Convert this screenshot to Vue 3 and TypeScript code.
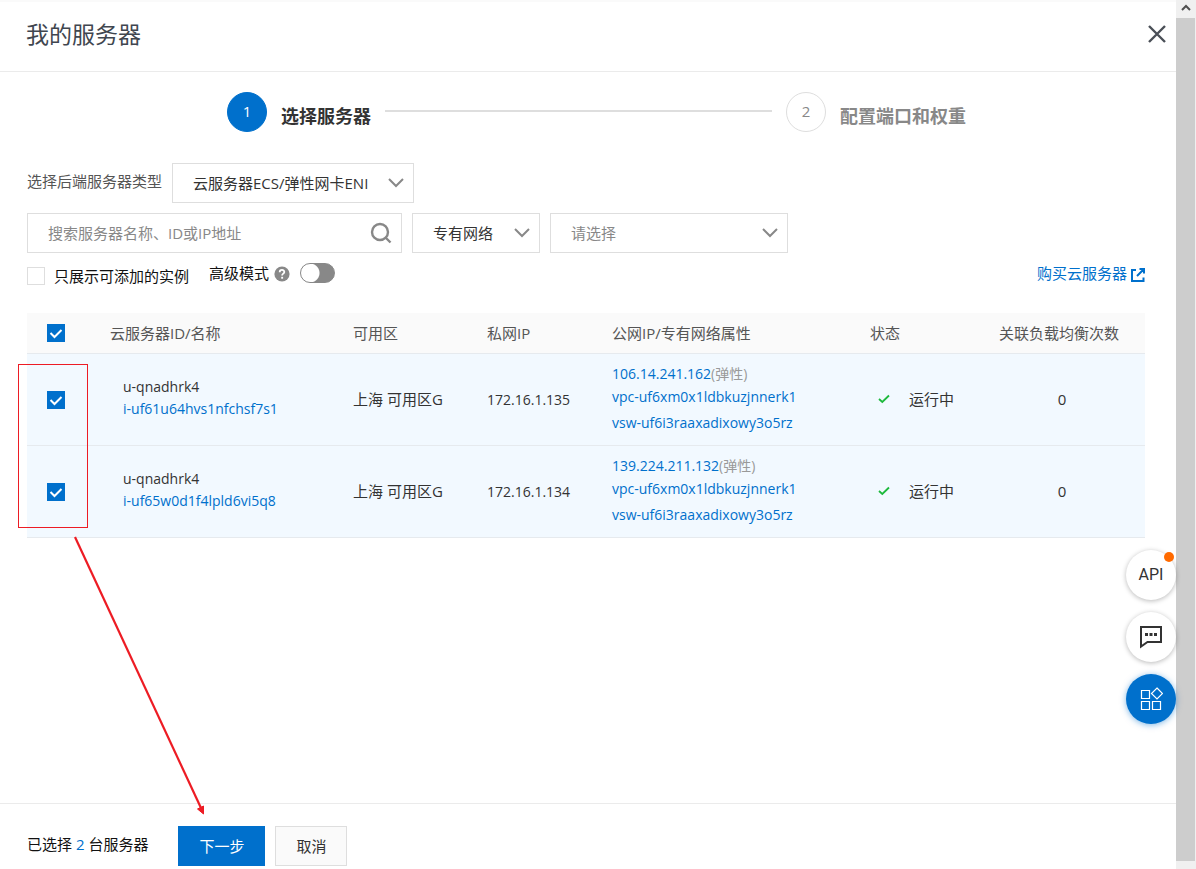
<script setup lang="ts">
import { computed, ref } from 'vue'

interface Server {
  name: string
  id: string
  zone: string
  privateIp: string
  publicIp: string
  vpc: string
  vswitch: string
  count: number
  checked: boolean
}

const servers = ref<Server[]>([
  {
    name: 'u-qnadhrk4',
    id: 'i-uf61u64hvs1nfchsf7s1',
    zone: '上海 可用区G',
    privateIp: '172.16.1.135',
    publicIp: '106.14.241.162',
    vpc: 'vpc-uf6xm0x1ldbkuzjnnerk1',
    vswitch: 'vsw-uf6i3raaxadixowy3o5rz',
    count: 0,
    checked: true,
  },
  {
    name: 'u-qnadhrk4',
    id: 'i-uf65w0d1f4lpld6vi5q8',
    zone: '上海 可用区G',
    privateIp: '172.16.1.134',
    publicIp: '139.224.211.132',
    vpc: 'vpc-uf6xm0x1ldbkuzjnnerk1',
    vswitch: 'vsw-uf6i3raaxadixowy3o5rz',
    count: 0,
    checked: true,
  },
])

const keyword = ref('')
const onlyAvailable = ref(false)
const advanced = ref(false)

const selectedCount = computed(() => servers.value.filter((s) => s.checked).length)
const allChecked = computed({
  get: () => servers.value.every((s) => s.checked),
  set: (value: boolean) => servers.value.forEach((s) => (s.checked = value)),
})
</script>

<template>
  <div class="page">
    <main class="panel">
      <header class="panel-header">
        <h1>我的服务器</h1>
        <button class="close" type="button" aria-label="关闭">
          <svg width="20" height="20" viewBox="0 0 20 20"><path d="M2 2L18 18M18 2L2 18" fill="none" stroke="#4a4f57" stroke-width="2.4" /></svg>
        </button>
      </header>

      <div class="content">
        <ol class="steps">
          <li class="step active"><span class="num">1</span><span class="step-title">选择服务器</span></li>
          <li class="line" aria-hidden="true"></li>
          <li class="step"><span class="num">2</span><span class="step-title">配置端口和权重</span></li>
        </ol>

        <form class="filters" @submit.prevent>
          <div class="row">
            <label class="type-label" for="type">选择后端服务器类型</label>
            <div class="select type">
              <select id="type"><option>云服务器ECS/弹性网卡ENI</option></select>
              <svg class="chev" width="16" height="10" viewBox="0 0 16 10"><path d="M1 1L8 8L15 1" /></svg>
            </div>
          </div>
          <div class="row">
            <div class="search">
              <input v-model="keyword" type="text" aria-label="搜索服务器" placeholder="搜索服务器名称、ID或IP地址" />
              <button type="button" aria-label="搜索">
                <svg width="22" height="22" viewBox="0 0 22 22"><circle cx="10" cy="10" r="8" /><path d="M15.500 15.500L20.500 20.500" /></svg>
              </button>
            </div>
            <div class="select network">
              <select aria-label="网络类型"><option>专有网络</option></select>
              <svg class="chev" width="16" height="10" viewBox="0 0 16 10"><path d="M1 1L8 8L15 1" /></svg>
            </div>
            <div class="select vpc">
              <select class="muted" aria-label="专有网络"><option>请选择</option></select>
              <svg class="chev" width="16" height="10" viewBox="0 0 16 10"><path d="M1 1L8 8L15 1" /></svg>
            </div>
          </div>
          <div class="row options">
            <label class="only"><input v-model="onlyAvailable" class="box" type="checkbox" />只展示可添加的实例</label>
            <label class="advanced" for="advanced">高级模式</label>
            <svg class="help" width="16" height="16" viewBox="0 0 16 16" aria-hidden="true">
              <circle cx="8" cy="8" r="7.600" fill="#888" />
              <path d="M5.700 6.300C5.700 3.200 10.300 3.300 10.300 6C10.300 7.700 8.100 7.600 8.100 9.500" fill="none" stroke="#fff" stroke-width="1.800" />
              <rect x="7.200" y="10.800" width="1.900" height="1.900" fill="#fff" />
            </svg>
            <input id="advanced" v-model="advanced" class="toggle" type="checkbox" role="switch" />
            <a class="buy" href="#">
              购买云服务器
              <svg width="14" height="14" viewBox="0 0 14 14"><path d="M5 2H1V13H12.500V9.500M8.500 1H13V5.500M12.500 1.500L6 8" fill="none" stroke="#0070cc" stroke-width="2" /></svg>
            </a>
          </div>
        </form>

        <table>
          <colgroup>
            <col class="c-check" /><col class="c-name" /><col class="c-zone" /><col class="c-private" />
            <col /><col class="c-state" /><col class="c-count" />
          </colgroup>
          <thead>
            <tr>
              <th><input v-model="allChecked" class="box" type="checkbox" aria-label="全选" /></th>
              <th>云服务器ID/名称</th>
              <th>可用区</th>
              <th>私网IP</th>
              <th>公网IP/专有网络属性</th>
              <th>状态</th>
              <th>关联负载均衡次数</th>
            </tr>
          </thead>
          <tbody>
            <tr v-for="server in servers" :key="server.id">
              <td><input v-model="server.checked" class="box" type="checkbox" :aria-label="server.id" /></td>
              <td class="name">
                <div>{{ server.name }}</div>
                <a href="#">{{ server.id }}</a>
              </td>
              <td class="middle">{{ server.zone }}</td>
              <td class="latin">{{ server.privateIp }}</td>
              <td class="net">
                <div class="ip"><a href="#">{{ server.publicIp }}</a><span>(弹性)</span></div>
                <a href="#">{{ server.vpc }}</a>
                <a href="#">{{ server.vswitch }}</a>
              </td>
              <td class="middle">
                <div class="state">
                  <svg width="12" height="10" viewBox="0 0 12 10"><path d="M1 5L4.300 8L11 1.500" fill="none" stroke="#1db93c" stroke-width="1.800" /></svg>
                  运行中
                </div>
              </td>
              <td class="count">{{ server.count }}</td>
            </tr>
          </tbody>
        </table>
      </div>

      <footer>
        <p>已选择 <span>{{ selectedCount }}</span> 台服务器</p>
        <button class="primary" type="button">下一步</button>
        <button type="button">取消</button>
      </footer>
    </main>

    <div class="scrollbar" aria-hidden="true">
      <div class="scroll-up"><svg width="10" height="7" viewBox="0 0 10 7"><path d="M1 6L5 2L9 6" fill="none" stroke="#505050" stroke-width="2" /></svg></div>
      <div class="thumb"></div>
    </div>

    <aside class="floating">
      <button type="button" class="api">API<span class="dot"></span></button>
      <button type="button" aria-label="反馈">
        <svg width="24" height="24" viewBox="0 0 24 24">
          <path d="M2 2H22V17H8.500L2 21.500Z" fill="none" stroke="#333" stroke-width="2" />
          <path d="M6 8H9V11H6ZM10.500 8H13.500V11H10.500ZM15 8H18V11H15Z" fill="#333" />
        </svg>
      </button>
      <button type="button" class="blue" aria-label="应用">
        <svg width="24" height="24" viewBox="0 0 24 24" fill="none" stroke="#fff" stroke-width="1.200">
          <path d="M2.500 3.500H10.500V11.500H2.500ZM2.500 14.500H10.500V22.500H2.500ZM13.500 14.500H21.500V22.500H13.500Z" />
          <path d="M18 1L23.500 6.500L18 12L12.500 6.500Z" />
        </svg>
      </button>
    </aside>

    <svg class="annotation" width="210" height="460" viewBox="0 0 210 460" aria-hidden="true">
      <rect x="18.500" y="4.500" width="69" height="163" fill="none" stroke="#ed1c24" />
      <path d="M75 177L201 448" fill="none" stroke="#ed1c24" stroke-width="2.200" />
      <path d="M203.500 454L197.500 449L203.500 446Z" fill="#ed1c24" stroke="#ed1c24" />
    </svg>
  </div>
</template>

<style>
body {
  margin: 0;
}
</style>

<style scoped>
* {
  box-sizing: border-box;
}
.page {
  position: relative;
  display: flex;
  min-height: 100vh;
  background: #fff;
  color: #333;
  font-family: "Open Sans", "Noto Sans CJK SC", sans-serif;
  font-size: 15px;
  line-height: 22px;
}
button,
input,
select {
  margin: 0;
  font: inherit;
  color: inherit;
}
button {
  padding: 0;
  cursor: pointer;
}
a {
  color: #0070cc;
  text-decoration: none;
}
.panel {
  flex: 1;
  min-width: 0;
  display: flex;
  flex-direction: column;
  border-top: 2px solid #fafafa;
}
.panel-header {
  display: flex;
  align-items: center;
  justify-content: space-between;
  height: 70px;
  padding: 0 9px 6px 26px;
  border-bottom: 1px solid #ebebeb;
}
h1 {
  margin: 0;
  font-size: 23px;
  line-height: 32px;
  font-weight: 400;
  color: #40464f;
}
.close {
  display: flex;
  border: 0;
  background: none;
}
.content {
  flex: 1;
  padding: 20px 31px 20px 27px;
}
.steps {
  display: flex;
  margin: 0 179px 31px 200px;
  padding: 0;
  list-style: none;
}
.step {
  display: flex;
  gap: 14px;
  color: #888;
}
.num {
  display: flex;
  align-items: center;
  justify-content: center;
  width: 40px;
  height: 40px;
  padding-bottom: 2px;
  border: 1px solid #dedede;
  border-radius: 50%;
}
.step-title {
  padding-top: 8px;
  font-size: 18px;
  line-height: 32px;
  font-weight: 700;
}
.active {
  color: #333;
}
.active .num {
  border-color: #0070cc;
  background: #0070cc;
  color: #fff;
}
.line {
  flex: 1;
  height: 2px;
  margin: 18px 14px 0;
  background: #dedede;
}
.filters {
  display: flex;
  flex-direction: column;
  gap: 10px;
}
.row {
  display: flex;
  gap: 10px;
}
.type-label {
  padding-top: 7px;
  color: #555;
}
.select {
  display: flex;
  align-items: center;
  position: relative;
  height: 40px;
}
.select select {
  width: 100%;
  height: 40px;
  padding: 0 40px 0 20px;
  border: 1px solid #dedede;
  border-radius: 0;
  background: #fff;
  appearance: none;
}
.select .muted {
  color: #888;
}
.chev {
  position: absolute;
  right: 10px;
  fill: none;
  stroke: #888;
  stroke-width: 2;
  pointer-events: none;
}
.type {
  width: 242px;
}
.network {
  width: 128px;
}
.vpc {
  width: 238px;
}
.search {
  display: flex;
  align-items: center;
  width: 375px;
  height: 40px;
  padding: 0 9px 0 20px;
  border: 1px solid #dedede;
}
.search input {
  flex: 1;
  min-width: 0;
  padding: 0;
  border: 0;
  outline: 0;
}
.search input::placeholder {
  color: #888;
  opacity: 1;
}
.search button {
  display: flex;
  border: 0;
  background: none;
}
.search svg {
  fill: none;
  stroke: #888;
  stroke-width: 2.4;
}
.options {
  align-items: flex-start;
  gap: 0;
  height: 50px;
}
.box {
  display: block;
  width: 18px;
  height: 18px;
  border: 1px solid #dedede;
  background: #fff;
  appearance: none;
}
.box:checked {
  border-color: #0070cc;
  background: #0070cc url("data:image/svg+xml,%3Csvg xmlns='http://www.w3.org/2000/svg' viewBox='0 0 16 16'%3E%3Cpath d='M2.500 8L6.500 12L13.500 5' fill='none' stroke='white' stroke-width='2'/%3E%3C/svg%3E") center / 16px 16px no-repeat;
}
.only {
  display: flex;
  align-items: center;
  gap: 9px;
  margin: 2px 20px 0 0;
  color: #111;
}
.advanced {
  line-height: 20px;
  color: #111;
}
.help {
  margin: 3px 10px 0 5px;
}
.toggle {
  width: 35px;
  height: 20px;
  border: 1px solid #888;
  border-radius: 10px;
  background: radial-gradient(circle at 9px 9px, #fff 9px, #888 10px);
  appearance: none;
}
.buy {
  display: flex;
  align-items: center;
  gap: 4px;
  margin-left: auto;
  line-height: 20px;
}
.buy svg {
  margin-top: 3px;
}
table {
  width: 100%;
  border-collapse: separate;
  border-spacing: 0;
  table-layout: fixed;
}
.c-check {
  width: 63px;
}
.c-name {
  width: 243px;
}
.c-zone {
  width: 134px;
}
.c-private {
  width: 125px;
}
.c-state {
  width: 129px;
}
.c-count {
  width: 166px;
}
th,
td {
  padding: 0 0 0 20px;
  border-bottom: 1px solid #e6eaee;
  text-align: left;
  vertical-align: middle;
  white-space: nowrap;
}
th {
  height: 41px;
  background: #fafafa;
  font-weight: 400;
  color: #555;
}
td {
  height: 92px;
  background: #f2f9ff;
}
td.name {
  padding: 0 0 4px 33px;
  font-size: 14px;
}
td.middle {
  padding-bottom: 2px;
}
.name a,
.net a {
  display: block;
}
.latin,
.net {
  font-size: 14px;
}
.net a {
  line-height: 26px;
}
.net .ip {
  display: flex;
  height: 20px;
  align-items: center;
}
.ip span {
  font-size: 14px;
  color: #999;
}
.state {
  display: flex;
  align-items: center;
  gap: 19px;
  padding-left: 8px;
}
td.count {
  padding: 0 0 2px;
  text-align: center;
}
footer {
  display: flex;
  gap: 10px;
  padding: 22px 27px 3px;
  border-top: 1px solid #ebebeb;
}
footer p {
  margin: 0 20px 0 0;
  padding-top: 7px;
  color: #111;
}
footer p span {
  color: #0070cc;
}
footer button {
  height: 40px;
  padding: 0 20px;
  border: 1px solid #dedede;
  background: #fafafa;
}
footer .primary {
  border-color: #0070cc;
  background: #0070cc;
  color: #fff;
}
.scrollbar {
  display: flex;
  flex-direction: column;
  width: 20px;
  padding: 0 1px 8px 0;
  background: #f0f0f0;
}
.scroll-up {
  display: flex;
  align-items: center;
  justify-content: center;
  height: 18px;
  padding-bottom: 3px;
}
.thumb {
  flex: 1;
  background: #cdcdcd;
}
.floating {
  position: absolute;
  right: 20px;
  bottom: 145px;
  display: flex;
  flex-direction: column;
  gap: 12px;
}
.floating button {
  position: relative;
  display: flex;
  align-items: center;
  justify-content: center;
  width: 50px;
  height: 50px;
  border: 0;
  border-radius: 50%;
  background: #fff;
  box-shadow: 0 1px 5px rgba(0, 0, 0, 0.28);
}
.floating .blue {
  background: #0070cc;
  box-shadow: 0 1px 6px rgba(0, 112, 204, 0.5);
}
.floating .api {
  font-family: Roboto, sans-serif;
  font-size: 16px;
}
.dot {
  position: absolute;
  top: 2px;
  right: 2px;
  width: 10px;
  height: 10px;
  border-radius: 50%;
  background: #ff6a00;
}
.annotation {
  position: absolute;
  left: 0;
  top: 360px;
  pointer-events: none;
}
</style>
